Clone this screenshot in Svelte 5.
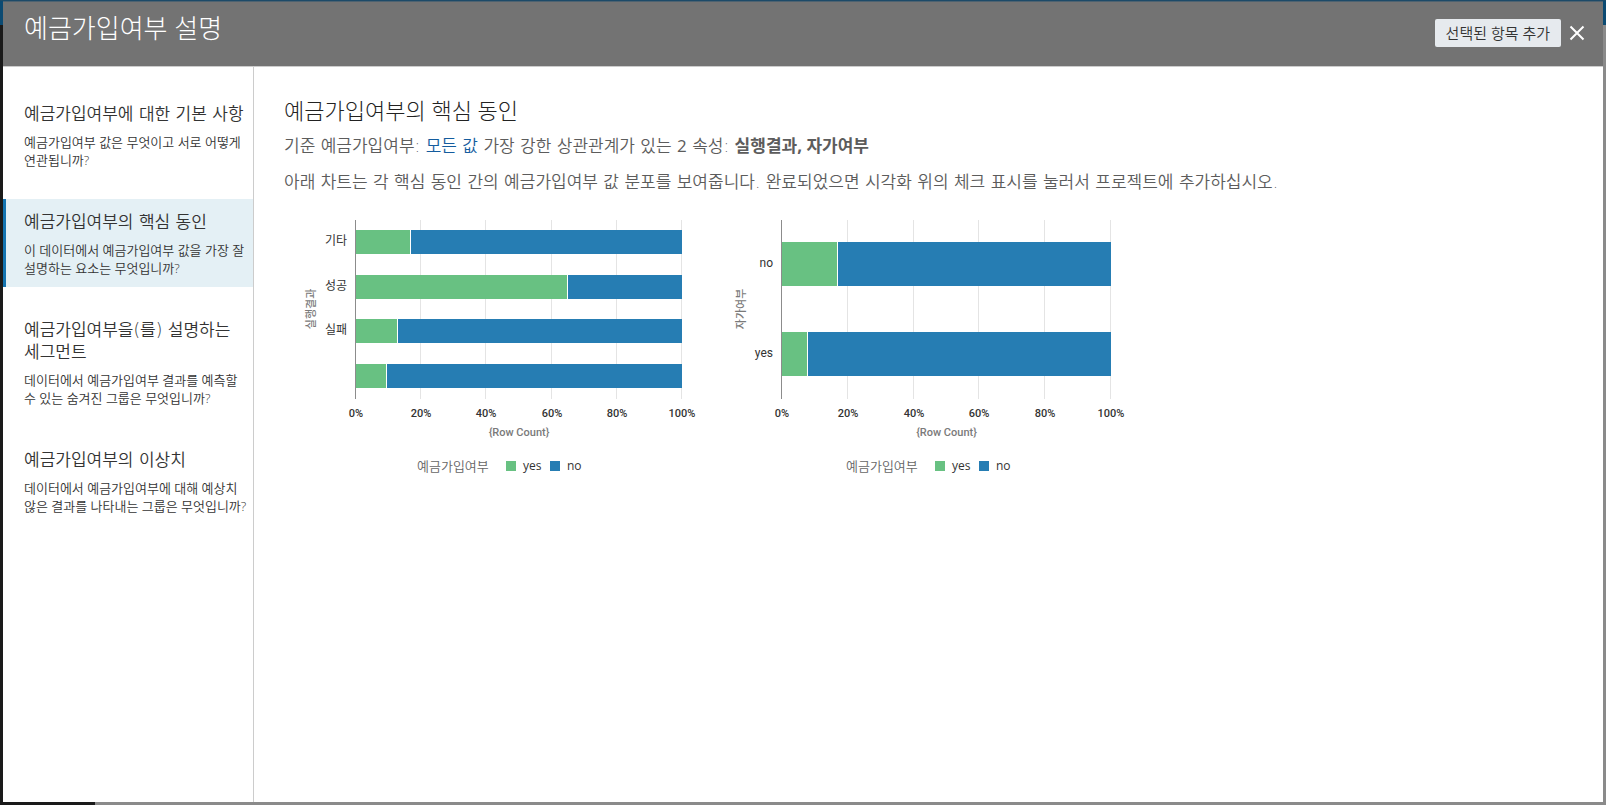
<script>
  const topics = [
    { title: '예금가입여부에 대한 기본 사항', text: '예금가입여부 값은 무엇이고 서로 어떻게 연관됩니까?' },
    { title: '예금가입여부의 핵심 동인', text: '이 데이터에서 예금가입여부 값을 가장 잘 설명하는 요소는 무엇입니까?' },
    { title: '예금가입여부을(를) 설명하는 세그먼트', text: '데이터에서 예금가입여부 결과를 예측할 수 있는 숨겨진 그룹은 무엇입니까?' },
    { title: '예금가입여부의 이상치', text: '데이터에서 예금가입여부에 대해 예상치 않은 결과를 나타내는 그룹은 무엇입니까?' }
  ];
  let selected = $state(1);

  const charts = [
    {
      axis: '실행결과',
      axisX: 31,
      width: 326,
      bar: 24,
      legend: 134,
      rows: [
        { label: '기타', yes: 17 },
        { label: '성공', yes: 65 },
        { label: '실패', yes: 13 },
        { label: '', yes: 9.5 }
      ]
    },
    {
      axis: '자가여부',
      axisX: 35,
      width: 329,
      bar: 44,
      legend: 137,
      rows: [
        { label: 'no', yes: 17 },
        { label: 'yes', yes: 8 }
      ]
    }
  ];
  const ticks = [0, 20, 40, 60, 80, 100];
  const left = 71;
  const top = 20;
  const height = 179;

  const tickX = (chart, t) => left + Math.round((chart.width * t) / 100);
  const barY = (chart, i) =>
    Math.floor(top + (height / chart.rows.length) * (i + 0.5) - chart.bar / 2);
</script>

<div class="backdrop">
  <div class="dialog" role="dialog" aria-labelledby="dialog-title">
    <header>
      <h1 id="dialog-title">예금가입여부 설명</h1>
      <div class="actions">
        <button class="add">선택된 항목 추가</button>
        <button class="close" aria-label="닫기">
          <svg width="16" height="16" viewBox="0 0 16 16">
            <path d="M1.5 1.5 14.5 14.5M14.5 1.5 1.5 14.5" stroke="#fff" stroke-width="2" fill="none" />
          </svg>
        </button>
      </div>
    </header>

    <div class="body">
      <nav>
        {#each topics as topic, i}
          <button class="topic" class:active={selected === i} onclick={() => (selected = i)}>
            <span class="topic-title">{topic.title}</span>
            <span class="topic-text">{topic.text}</span>
          </button>
        {/each}
      </nav>

      <main>
        <h2>예금가입여부의 핵심 동인</h2>
        <p>기준 예금가입여부: <a href="#values">모든 값</a> 가장 강한 상관관계가 있는 <span class="count">2</span> 속성: <strong>실행결과, 자가여부</strong></p>
        <p>아래 차트는 각 핵심 동인 간의 예금가입여부 값 분포를 보여줍니다. 완료되었으면 시각화 위의 체크 표시를 눌러서 프로젝트에 추가하십시오.</p>

        <div class="charts">
          {#each charts as chart}
            <svg class="chart" width="426" height="290" viewBox="0 0 426 290" role="img" aria-label={chart.axis}>
              {#each ticks as t}
                <rect x={tickX(chart, t)} y={top} width="1" height={height} fill={t ? '#e4e4e4' : '#8c8c8c'} />
                <text class="tick" x={tickX(chart, t) + 1} y="217" text-anchor="middle">{t}%</text>
              {/each}
              {#each chart.rows as row, i}
                {@const split = Math.round((chart.width * row.yes) / 100)}
                <rect x={left + 1} y={barY(chart, i)} width={split - 1} height={chart.bar} fill="#68c182" />
                <rect x={left + split + 1} y={barY(chart, i)} width={chart.width - split} height={chart.bar} fill="#267db3" />
                <text class="category" x="63" y={barY(chart, i) + chart.bar / 2 + 3} text-anchor="end">{row.label}</text>
              {/each}
              <text class="axis" transform="translate({chart.axisX} 109) rotate(-90)" text-anchor="middle">{chart.axis}</text>
              <text class="axis" x={left + chart.width / 2 + 1} y="236" text-anchor="middle">&#123;Row Count&#125;</text>
              <text class="legend-title" x={chart.legend - 1} y="271">예금가입여부</text>
              <rect x={chart.legend + 88} y="261" width="10" height="10" fill="#68c182" />
              <text class="legend" x={chart.legend + 105} y="270">yes</text>
              <rect x={chart.legend + 132} y="261" width="10" height="10" fill="#267db3" />
              <text class="legend" x={chart.legend + 149} y="270">no</text>
            </svg>
          {/each}
        </div>
      </main>
    </div>
  </div>
</div>

<style>
  :global(body) {
    margin: 0;
  }

  .backdrop {
    box-sizing: border-box;
    min-height: 100vh;
    display: flex;
    padding: 1px 3px 3px;
    background:
      linear-gradient(#1c4a68, #1c4a68) 0 0 / 100% 1px no-repeat,
      linear-gradient(#0b4a72, #0b4a72) 0 0 / 100% 25px no-repeat,
      linear-gradient(#1a1a1a, #1a1a1a) 0 0 / 3px 100% no-repeat,
      linear-gradient(#1a1a1a, #1a1a1a) 0 100% / 95px 3px no-repeat,
      #8a8a8a;
    font-family: "Open Sans", "Noto Sans CJK KR", sans-serif;
    color: #333;
  }

  .dialog {
    flex: 1;
    display: flex;
    flex-direction: column;
    background: #fff;
  }

  header {
    box-sizing: border-box;
    height: 66px;
    display: flex;
    justify-content: space-between;
    align-items: flex-start;
    padding: 0 18px 0 21px;
    background: #737373;
    border-top: 1px solid #4d6270;
    border-bottom: 1px solid #ccc;
  }

  h1 {
    margin: 9px 0 0;
    font-size: 26px;
    line-height: 34px;
    font-weight: 300;
    color: #fff;
  }

  .actions {
    display: flex;
    align-items: center;
    gap: 8px;
    margin-top: 17px;
  }

  button {
    font-family: inherit;
    border: 0;
    cursor: pointer;
  }

  .add {
    height: 28px;
    padding: 0 11px;
    border-radius: 2px;
    background: #e6eaee;
    color: #333;
    font-size: 15px;
    line-height: 28px;
    font-weight: 350;
  }

  .close {
    display: flex;
    padding: 0;
    background: none;
  }

  .body {
    flex: 1;
    display: flex;
  }

  nav {
    box-sizing: border-box;
    flex: none;
    width: 251px;
    display: flex;
    flex-direction: column;
    gap: 20px;
    padding-top: 24px;
    border-right: 1px solid #ccc;
  }

  .topic {
    display: flex;
    flex-direction: column;
    gap: 8px;
    padding: 12px 4px 10px 18px;
    border-left: 3px solid transparent;
    background: none;
    color: #333;
    text-align: left;
    word-break: keep-all;
  }

  .topic.active {
    background: #e4f0f5;
    border-left-color: #1474b0;
  }

  .topic-title {
    font-family: "DejaVu Sans", "Noto Sans CJK KR", sans-serif;
    font-size: 17px;
    line-height: 22px;
    font-weight: 350;
  }

  .topic-text {
    font-size: 13px;
    line-height: 18px;
    font-weight: 350;
  }

  main {
    flex: 1;
    padding: 28px 30px 0;
  }

  h2 {
    margin: 0 0 8px;
    font-size: 22px;
    line-height: 30px;
    font-weight: 300;
    color: #222;
  }

  p {
    margin: 0;
    font-family: "DejaVu Sans", "Noto Sans CJK KR", sans-serif;
    font-size: 17px;
    line-height: 26px;
    color: #5c5c5c;
    font-weight: 350;
  }

  p + p {
    margin-top: 10px;
  }

  .count,
  strong {
    font-family: "Open Sans", "Noto Sans CJK KR", sans-serif;
  }

  .count {
    font-weight: 400;
  }

  a {
    color: #145c9e;
    text-decoration: none;
  }

  .charts {
    display: flex;
    flex-wrap: wrap;
    margin-top: 5px;
  }

  .chart {
    display: block;
  }

  .tick,
  .category,
  .axis {
    font-family: Roboto, "Noto Sans CJK KR", sans-serif;
    font-size: 11px;
    font-weight: 500;
    fill: #333;
  }

  .category {
    font-size: 12px;
    font-weight: 400;
  }

  .axis {
    fill: #7a7a7a;
  }

  .legend-title {
    font-size: 13px;
    font-weight: 350;
    fill: #666;
  }

  .legend {
    font-size: 12px;
    fill: #333;
  }
</style>
